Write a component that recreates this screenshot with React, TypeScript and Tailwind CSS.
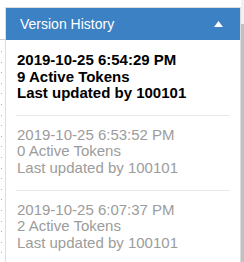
import React from "react";

const items = [
  { date: "2019-10-25 6:54:29 PM", tokens: "9 Active Tokens", by: "Last updated by 100101", active: true },
  { date: "2019-10-25 6:53:52 PM", tokens: "0 Active Tokens", by: "Last updated by 100101", active: false },
  { date: "2019-10-25 6:07:37 PM", tokens: "2 Active Tokens", by: "Last updated by 100101", active: false },
];

export default function App() {
  const dots = Array.from({ length: 20 });
  return (
    <div className="w-[244px] h-[262px] overflow-hidden bg-white flex items-start font-['Liberation_Sans',Arial,sans-serif]">
      <div className="w-[5px] h-[223px] overflow-hidden shrink-0 mt-[39px] border-t border-[#cfcfcf] flex flex-col gap-[9.6px] pt-[11px] pl-[1px]">
        {dots.map((_, i) => (
          <div key={i} className="w-[1px] h-[1px] bg-[#b0b0b0] shrink-0" />
        ))}
      </div>
      <div className="w-[236px] h-[255px] overflow-hidden shrink-0 mt-[7px] border-t border-l border-r border-[#dddddd] flex flex-col">
        <div className="h-[32px] shrink-0 bg-[#3b81c4] flex items-center justify-between pl-[14px] pr-[17px]">
          <span className="text-white text-[14px] leading-none">Version History</span>
          <svg width="9" height="6" viewBox="0 0 9 6" className="block">
            <polygon points="4.5,0 9,6 0,6" fill="#ffffff" />
          </svg>
        </div>
        <div className="px-[10px] flex flex-col">
          {items.map((it, i) => (
            <div
              key={i}
              className={
                (i === 0 ? "pt-[12px] " : "pt-[11px] ") +
                (i < items.length - 1 ? "pb-[13px] border-b border-[#e8e8e8] " : "pb-[13px] ") +
                "text-[15px] leading-[16.6px] pl-[1px] " +
                (it.active ? "font-bold text-black" : "text-[#9c9c9c]")
              }
            >
              <div>{it.date}</div>
              <div>{it.tokens}</div>
              <div>{it.by}</div>
            </div>
          ))}
        </div>
      </div>
      <div className="w-[3px] h-[262px] shrink-0 flex flex-col bg-[#f1f1f1]">
        <div className="h-[24px]" />
        <div className="flex-1 bg-[#c1c1c1]" />
      </div>
    </div>
  );
}
